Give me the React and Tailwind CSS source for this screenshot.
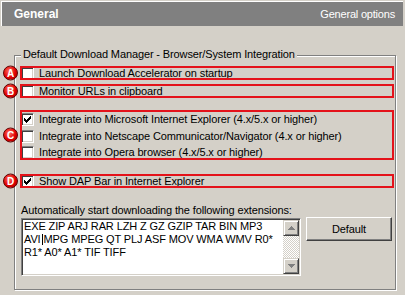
function Check({ checked }) {
  return (
    <span className="w-[13px] h-[13px] shrink-0 bg-white border border-t-[#808080] border-l-[#808080] border-r-white border-b-white shadow-[inset_1px_1px_0_#404040,inset_-1px_-1px_0_#d4d0c8] flex items-center justify-center">
      {checked && (
        <svg width="7" height="7" viewBox="0 0 7 7" shapeRendering="crispEdges">
          <rect x="6" y="0" width="1" height="1" fill="#000" />
          <rect x="5" y="1" width="2" height="1" fill="#000" />
          <rect x="0" y="2" width="1" height="1" fill="#000" />
          <rect x="4" y="2" width="3" height="1" fill="#000" />
          <rect x="0" y="3" width="2" height="1" fill="#000" />
          <rect x="3" y="3" width="3" height="1" fill="#000" />
          <rect x="0" y="4" width="5" height="1" fill="#000" />
          <rect x="1" y="5" width="3" height="1" fill="#000" />
          <rect x="2" y="6" width="1" height="1" fill="#000" />
        </svg>
      )}
    </span>
  );
}

function Badge({ letter }) {
  return (
    <span className="absolute left-[-17px] top-1/2 -translate-y-1/2 w-[15px] h-[15px] rounded-full bg-[radial-gradient(circle_at_40%_35%,#ff7060,#e00000_55%,#900000)] border border-[#600000] text-white text-[10px] font-bold flex items-center justify-center leading-none z-10 tracking-normal">
      {letter}
    </span>
  );
}

function Row({ checked, children, h = "h-[14px]" }) {
  return (
    <div className={`flex items-center ${h}`}>
      <span className="ml-[1px]">
        <Check checked={checked} />
      </span>
      <span className="ml-[5px] whitespace-nowrap">{children}</span>
    </div>
  );
}

function RedBox({ letter, children, className = "" }) {
  return (
    <div className={`relative ${className}`}>
      {children}
      <div className="absolute inset-0 border-2 border-[#e4121a] pointer-events-none" />
      <Badge letter={letter} />
    </div>
  );
}

function ScrollBtn({ up }) {
  return (
    <div className="h-[16px] w-[16px] bg-[#d4d0c8] border border-t-[#d4d0c8] border-l-[#d4d0c8] border-r-[#404040] border-b-[#404040] shadow-[inset_1px_1px_0_#fff,inset_-1px_-1px_0_#808080] flex items-center justify-center">
      <svg width="7" height="4" viewBox="0 0 7 4" shapeRendering="crispEdges">
        {up ? (
          <path d="M3 0h1v1h1v1h1v1h1v1H0V3h1V2h1V1h1z" fill="#808080" />
        ) : (
          <path d="M0 0h7v1H6v1H5v1H4v1H3V3H2V2H1V1H0z" fill="#808080" />
        )}
      </svg>
    </div>
  );
}

export default function App() {
  return (
    <div className="w-[405px] h-[295px] bg-[#d4d0c8] overflow-hidden pt-px pl-px font-['Liberation_Sans',Arial,sans-serif] text-[11px] tracking-[-0.12px] text-black">
      <div className="h-[25px] w-[402px] border-t border-l border-white bg-[#808080] flex items-center justify-between pl-[12px] pr-[8px] text-white">
        <span className="font-bold text-[12px] tracking-normal">General</span>
        <span className="text-[11px] tracking-[-0.2px]">General options</span>
      </div>

      <div className="relative ml-[13px] mt-[29px] w-[382px] h-[235px] border border-[#808080] shadow-[1px_1px_0_#fff,inset_1px_1px_0_#fff] pt-[10px] pl-[5px] pr-px">
        <span className="absolute top-[-8px] left-[6px] px-[2px] bg-[#d4d0c8] leading-[13px] whitespace-nowrap">
          Default Download Manager - Browser/System Integration
        </span>

        <RedBox letter="A">
          <Row>Launch Download Accelerator on startup</Row>
        </RedBox>
        <RedBox letter="B" className="mt-[4px]">
          <Row>Monitor URLs in clipboard</Row>
        </RedBox>
        <RedBox letter="C" className="mt-[12px] h-[50px] flex flex-col pt-px">
          <Row checked h="h-[17px]">Integrate into Microsoft Internet Explorer (4.x/5.x or higher)</Row>
          <Row h="h-[17px]">Integrate into Netscape Communicator/Navigator (4.x or higher)</Row>
          <Row h="h-[15px]">Integrate into Opera browser (4.x/5.x or higher)</Row>
        </RedBox>
        <RedBox letter="D" className="mt-[14px]">
          <Row checked>Show DAP Bar in Internet Explorer</Row>
        </RedBox>

        <div className="mt-[16px] pl-px leading-[13px]">
          Automatically start downloading the following extensions:
        </div>

        <div className="mt-px flex items-start">
          <div className="ml-px w-[280px] h-[58px] bg-white border border-t-[#808080] border-l-[#808080] border-r-white border-b-white shadow-[inset_1px_1px_0_#404040,inset_-1px_-1px_0_#d4d0c8] p-px flex">
            <div className="flex-1 pl-px leading-[13px] whitespace-nowrap overflow-hidden">
              <div>EXE ZIP ARJ RAR LZH Z GZ GZIP TAR BIN MP3</div>
              <div>
                AVI<span className="inline-block w-px h-[11px] bg-black align-[-2px] mx-[1px]" />MPG MPEG QT PLJ ASF MOV WMA WMV R0*
              </div>
              <div>R1* A0* A1* TIF TIFF</div>
            </div>
            <div className="w-[16px] flex flex-col">
              <ScrollBtn up />
              <div className="flex-1 bg-[repeating-conic-gradient(#d4d0c8_0_25%,#fff_0_50%)] bg-[length:2px_2px]" />
              <ScrollBtn />
            </div>
          </div>
          <button className="ml-[5px] -mt-px w-[86px] h-[24px] bg-[#d4d0c8] border border-t-white border-l-white border-r-[#404040] border-b-[#404040] shadow-[inset_-1px_-1px_0_#808080] text-[11px] flex items-center justify-center">
            Default
          </button>
        </div>
      </div>
    </div>
  );
}
